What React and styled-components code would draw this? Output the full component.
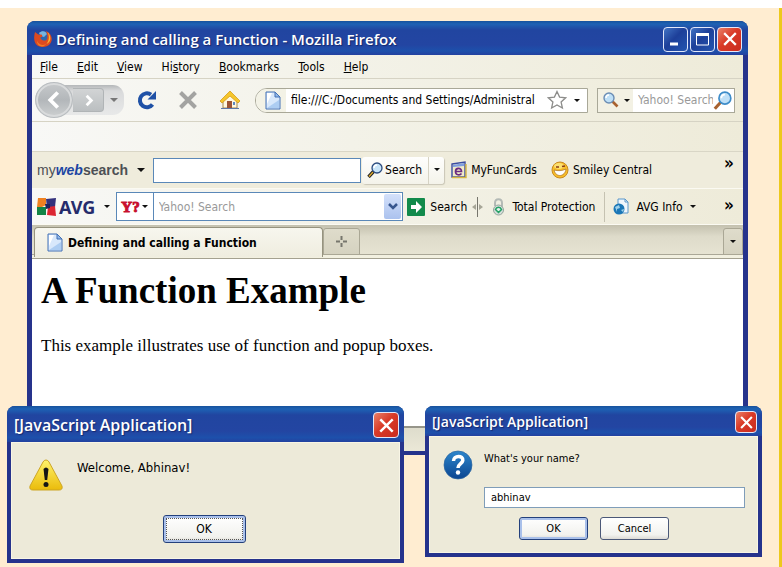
import React from 'react';
import styled, { createGlobalStyle, css } from 'styled-components';

const ui = '"DejaVu Sans Condensed", "DejaVu Sans", sans-serif';
const caption = '"Open Sans", "Noto Sans", sans-serif';

const Global = createGlobalStyle`
  * { box-sizing: border-box; }
  body { margin: 0; background: #fff; font-family: ${ui}; font-size: 12px; color: #000; }
  button, input { font: inherit; color: inherit; }
  button { padding: 0; border: 0; background: none; }
  svg { display: block; flex: none; }
`;

const Desktop = styled.main`
  position: relative;
  margin-top: 8px;
  min-height: calc(100vh - 8px);
  padding: 13px 31px 20px 27px;
  background: #ffedd1;
  border-right: 3px solid #edc91d;
`;

const frame = css`
  border: 5px solid #26338c;
  border-top: 0;
  border-radius: 8px 8px 0 0;
  background: #26338c;
`;

const Browser = styled.section`
  ${frame}
  border-bottom-width: 4px;
`;

const TitleBar = styled.header`
  display: flex;
  align-items: center;
  gap: 4px;
  height: ${p => p.$height}px;
  margin: 0 -5px;
  padding: 2px ${p => (p.$main ? 6 : 5)}px 0 7px;
  border-radius: 8px 8px 0 0;
  background: linear-gradient(#17529c 0, #1e62b4 3px, #2145a0 9px, #2345a2 70%, #1d50ab 88%, #2341a0 100%);
`;

const Title = styled.h2`
  flex: 1;
  min-width: 0;
  margin: 0;
  overflow: hidden;
  white-space: nowrap;
  font: 600 ${p => p.$size}px/22px ${caption};
  color: #fff;
  text-shadow: 1px 1px 1px #14296e;
`;

const CaptionButtons = styled.div`
  display: flex;
  gap: 2px;
`;

const CaptionButton = styled.button`
  display: grid;
  place-items: center;
  width: ${p => p.$size}px;
  height: ${p => p.$size}px;
  border: 1px solid #e2e8fa;
  border-radius: 4px;
  background: ${p => (p.$close
    ? 'linear-gradient(135deg, #ea8068, #d93a27 45%, #c92b20)'
    : 'linear-gradient(135deg, #4174c4, #1d3f99 45%, #2355b0)')};
`;

const Chrome = styled.div`
  background: linear-gradient(90deg, #f8f8f6, #f3f2e8 45%, #eeebd9);
`;

const MenuBar = styled.nav`
  display: flex;
  align-items: center;
  gap: 19px;
  height: 24px;
  padding: 0 8px;
  border-bottom: 1px solid #d6d3c4;
`;

const MenuItem = styled.button`
  line-height: 20px;
`;

const NavBar = styled.div`
  display: flex;
  align-items: center;
  height: 43px;
  padding: 0 8px 0 3px;
  border-bottom: 1px solid #d6d3c4;
`;

const HistoryGroup = styled.div`
  display: flex;
  align-items: center;
  height: 30px;
  width: 89px;
  border-radius: 16px 12px 12px 16px;
  background: linear-gradient(#b4b7b9, #d9dadb 20%, #e8e9e9);
`;

const BackButton = styled.button`
  display: grid;
  place-items: center;
  width: 38px;
  height: 36px;
  border-radius: 50%;
  border: 1px solid #b9bdc0;
  box-shadow: inset 0 0 0 2px #d9dbdc;
  background: linear-gradient(#c6c9cb, #b3b7ba 50%, #cdd0d1);
`;

const ForwardButton = styled.button`
  display: grid;
  place-items: center;
  width: 31px;
  height: 24px;
  border: 1px solid #b0b4b6;
  border-left: 0;
  border-radius: 0 4px 4px 0;
  background: linear-gradient(#d2d4d5, #bbbfc1);
`;

const Caret = styled.button`
  display: grid;
  place-items: center;
  width: ${p => p.$width || 20}px;
  height: 22px;
  color: ${p => p.$color || '#111'};
  &::after {
    content: '';
    border: ${p => p.$size || 3}px solid transparent;
    border-top-color: currentColor;
    border-bottom: 0;
  }
`;

const NavActions = styled.div`
  display: flex;
  align-items: center;
  gap: 21px;
  padding: 0 14px 0 13px;
`;

const IconButton = styled.button`
  display: grid;
  place-items: center;
`;

const AddressBox = styled.div`
  flex: 1 1 334px;
  min-width: 0;
  display: flex;
  align-items: center;
  height: 25px;
  overflow: hidden;
  border: 1px solid #a9a898;
  border-radius: 12px 0 0 12px;
  background: #fff;
`;

const PageBadge = styled.span`
  display: grid;
  place-items: center;
  width: 30px;
  height: 23px;
  background: #f3f2e6;
  padding-left: 3px;
`;

const Field = styled.input`
  flex: 1;
  width: 0;
  min-width: 0;
  height: 22px;
  padding: 0 0 0 ${p => p.$pad || 5}px;
  border: 0;
  outline: 0;
  background: transparent;
  &::placeholder { color: #999; opacity: 1; }
`;

const SearchBox = styled.div`
  flex: 0 0 138px;
  display: flex;
  align-items: center;
  height: 25px;
  margin-left: 9px;
  padding-right: 2px;
  border: 1px solid #a9a898;
  background: #fff;
`;

const EngineButton = styled.button`
  display: flex;
  align-items: center;
  gap: 5px;
  height: 23px;
  padding: 0 3px 0 5px;
  background: #f3f1e4;
`;

const Arrow = styled.span`
  border: 3px solid transparent;
  border-top-color: #111;
  border-bottom: 0;
`;

const BlankBar = styled.div`
  height: 30px;
  border-bottom: 1px solid #d9d6c6;
`;

const ToolRow = styled.div`
  display: flex;
  align-items: center;
  height: ${p => p.$height}px;
  padding: 0 9px 0 5px;
  border-bottom: 1px solid #fbfaf2;
  background: ${p => (p.$tint ? '#efecdc' : 'transparent')};
`;

const WebSearchMark = styled.span`
  font: 700 14px/20px "Liberation Sans", Arial, sans-serif;
  color: #4d5054;
  i { color: #1b45a3; }
  span { font-weight: 400; }
`;

const BlueInput = styled.input`
  flex: 0 1 208px;
  min-width: 0;
  height: 25px;
  padding: 0 5px;
  border: 1px solid #5a88b8;
  background: #fff;
`;

const SplitButton = styled.div`
  display: flex;
  height: 27px;
  margin-left: 1px;
  border-radius: 3px;
  background: linear-gradient(#fefefd, #f4f3ea);
  box-shadow: 1px 1px 1px #c9c6b6;
`;

const LabelButton = styled.button`
  display: flex;
  align-items: center;
  gap: ${p => p.$gap || 4}px;
  margin-left: ${p => p.$lead || 0}px;
  white-space: nowrap;
`;

const SplitArrow = styled.span`
  display: flex;
  border-left: 1px solid #d6d3c5;
  margin-left: 6px;
  padding-top: 2px;
`;

const Overflow = styled.button`
  margin-left: auto;
  font: 700 17px/18px ${ui};
  padding-bottom: ${p => p.$raise || 3}px;
`;

const AvgMark = styled.strong`
  margin: 0 2px;
  font: 700 18px/24px "Noto Sans", sans-serif;
  color: #252c6c;
`;

const Combo = styled.div`
  flex: 0 1 287px;
  min-width: 0;
  display: flex;
  align-items: center;
  height: 29px;
  border: 1px solid #5a88b8;
  background: #fff;
`;

const YahooButton = styled.button`
  display: flex;
  align-items: center;
  gap: 2px;
  height: 27px;
  padding: 0 5px 0 4px;
  border-right: 1px solid #5a88b8;
`;

const YahooMark = styled.span`
  font: 700 15px/18px "Liberation Serif", serif;
  color: #c8102e;
  -webkit-text-stroke: 1px #c8102e;
`;

const DropButton = styled.button`
  display: grid;
  place-items: center;
  width: 17px;
  height: 25px;
  margin-right: 1px;
  border-radius: 2px;
  background: linear-gradient(#d4e1fb, #abc2ee);
`;

const Divider = styled.span`
  width: 1px;
  height: 30px;
  margin-left: 9px;
  background: #c5c2b1;
`;

const TabStrip = styled.div`
  display: flex;
  align-items: flex-end;
  height: 34px;
  border-bottom: 1px solid #a4a190;
  box-shadow: inset 0 -3px #f2f0e0, inset 0 -4px #aaa797;
  padding: 0 0 3px 2px;
  background: linear-gradient(#c4c1af, #dedbca 35%, #e8e5d4);
`;

const Tab = styled.button`
  display: flex;
  align-items: center;
  gap: 5px;
  flex: 0 1 289px;
  min-width: 0;
  height: 30px;
  margin-bottom: -2px;
  padding: 0 12px;
  border: 1px solid #96937f;
  border-bottom: 0;
  border-radius: 4px 4px 0 0;
  background: linear-gradient(#f7f6ee, #efeddf);
  font-weight: 700;
  white-space: nowrap;
`;

const SmallTab = styled.button`
  display: grid;
  place-items: center;
  width: ${p => p.$width}px;
  height: 27px;
  border: 1px solid #aaa795;
  border-radius: 3px 3px 0 0;
  background: linear-gradient(#dfdccb, #d5d2c0);
  margin-left: ${p => (p.$end ? 'auto' : '0')};
`;

const Page = styled.article`
  min-height: 167px;
  padding: 10px 9px;
  background: #fff;
  color: #000;
  font-family: "Liberation Serif", "Times New Roman", serif;
  h1 { margin: 0 0 23px; font-size: 37px; line-height: 44px; }
  p { margin: 0; font-size: 17px; line-height: 20px; }
`;

const StatusBar = styled.footer`
  height: 25px;
  border-top: 2px solid #96958a;
  background: linear-gradient(#dedccc, #ebe8d7);
`;

const Dialogs = styled.div`
  position: absolute;
  top: 398px;
  left: 7px;
  right: 17px;
  display: flex;
  align-items: flex-start;
  gap: 21px;
`;

const Dialog = styled.section`
  ${frame}
  flex: 0 1 ${p => p.$basis}px;
  min-width: 0;
  border-width: 0 4px 4px;
  > header { margin: 0 -4px; }
`;

const DialogBody = styled.div`
  display: grid;
  grid-template-columns: auto 1fr;
  column-gap: ${p => (p.$prompt ? 11 : 14)}px;
  min-height: 117px;
  padding: ${p => (p.$prompt ? '13px 12px 12px 13px' : '16px 20px 15px 17px')};
  border: 1px solid #f8f5e5;
  background: #edead9;
`;

const Message = styled.p`
  margin: 0;
  font-size: ${p => p.$size}px;
  line-height: 18px;
`;

const PromptInput = styled.input`
  width: 100%;
  height: 21px;
  margin-top: 19px;
  padding: 0 6px;
  border: 1px solid #7f9db9;
  background: #fff;
  font-size: 11px;
`;

const Actions = styled.div`
  grid-column: 1 / -1;
  display: flex;
  justify-content: center;
  align-self: end;
  gap: 12px;
`;

const PushButton = styled.button`
  width: ${p => p.$width}px;
  height: ${p => p.$height}px;
  border: 1px solid #4b5878;
  border-radius: 3px;
  background: linear-gradient(#fff, #f2f2ee 80%, #dddbd5);
  font-size: ${p => (p.$height > 25 ? 12 : 11)}px;
  ${p => p.$primary && css`border-color: #23407c; box-shadow: inset 0 0 0 2px #a9c0ea;`}
  ${p => p.$focused && css`outline: 1px dotted #555; outline-offset: -4px;`}
`;

const Close = ({ size = 14 }) => (
  <svg width={size} height={size} viewBox="0 0 14 14"><path d="M2 2l10 10M12 2L2 12" stroke="#fff" strokeWidth="2.3" strokeLinecap="square" /></svg>
);

const Fox = () => (
  <svg width="18" height="18" viewBox="0 0 18 18">
    <circle cx="9.500" cy="7" r="6" fill="#2b66ae" />
    <path d="M5 3c3-3 7-2 8 1l-3 3-3-1z" fill="#75b4df" />
    <path d="M1 2l4 3c2-1 4 0 3 2-2 0-2 1-1 2 2 2 5 2 6 0 1-3 0-5-1-8 9 4 7 16-3 16C0 17-1 9 1 2z" fill="#dd4a20" />
    <path d="M13.500 2c4 4 4 10-1 12 3-4 3-8 1-12z" fill="#f7b632" />
    <path d="M3 11c2 4 6 5 9 3-2 4-9 3-9-3z" fill="#f17c24" />
  </svg>
);

const Chevron = ({ flip, size }) => (
  <svg width={size} height={size} viewBox="0 0 16 16"><path d={flip ? 'M6 3l5 5-5 5' : 'M11 2L5 8l6 6'} fill="none" stroke="#fff" strokeWidth="3" /></svg>
);

const Reload = () => (
  <svg width="20" height="20" viewBox="0 0 20 20">
    <path d="M15.500 14.500A7 7 0 1 1 14 4.600" fill="none" stroke="#1f51a6" strokeWidth="4" />
    <path d="M19 1v8.500h-8.500z" fill="#1f51a6" />
  </svg>
);

const Stop = () => (
  <svg width="20" height="20" viewBox="0 0 20 20"><path d="M2.500 2.500l15 15M17.500 2.500l-15 15" stroke="#a3a3a1" strokeWidth="4" /></svg>
);

const Home = () => (
  <svg width="22" height="20" viewBox="0 0 22 20">
    <path d="M4 10v8h14v-8l-7-6z" fill="#fff8df" stroke="#a8884a" />
    <path d="M11 1L1 11l2 2 8-7 8 7 2-2z" fill="#f5c62b" stroke="#d79c18" strokeWidth=".8" />
    <rect x="8" y="11" width="5" height="7" fill="#9c5435" /><rect x="14" y="12" width="2" height="3" fill="#5d88c3" />
    <path d="M2 18.500h18" stroke="#5d78a8" />
  </svg>
);

const Doc = () => (
  <svg width="16" height="19" viewBox="0 0 16 19">
    <path d="M1 1h9l5 5v12H1z" fill="#d8e8fb" stroke="#4370b5" />
    <path d="M2 2h5L2 13z" fill="#fff" /><path d="M10 1v5h5z" fill="#92b9e9" stroke="#4370b5" />
    <path d="M2 17h12V9z" fill="#adcdf2" />
  </svg>
);

const Star = () => (
  <svg width="20" height="20" viewBox="0 0 20 20"><path d="M10 1.500l2.600 5.600 6 .7-4.500 4.100 1.300 6.100-5.400-3.100L4.600 18l1.300-6.100-4.500-4.100 6-.7z" fill="#fff" stroke="#8d8d8b" strokeWidth="1.300" /></svg>
);

const Lens = ({ size = 16, flip, handle = '#a9622f', rim = '#6c8db4' }) => (
  <svg width={size} height={size} viewBox="0 0 16 16">
    <path d={flip ? 'M6.500 9.500L1.500 15' : 'M9.500 9.500l5 5'} stroke={handle} strokeWidth="2.600" />
    <circle cx={flip ? 10 : 6} cy="6" r="5" fill="#bfe0f7" stroke={rim} strokeWidth="1.400" />
    <path d={flip ? 'M7 6c0-2 1-3 3-3' : 'M3 6c0-2 1-3 3-3'} fill="none" stroke="#fff" strokeWidth="1.500" />
  </svg>
);

const BarLens = () => (
  <svg width="16" height="16" viewBox="0 0 16 16">
    <path d="M6.500 9.500L1.500 15" stroke="#222" strokeWidth="3.400" />
    <path d="M6 10l-4 4.500" stroke="#e3ae2c" strokeWidth="1.300" />
    <circle cx="10" cy="6" r="5" fill="#c9e5f8" stroke="#2d4c7e" strokeWidth="1.300" />
    <path d="M7 6c0-2 1-3 3-3" fill="none" stroke="#fff" strokeWidth="1.500" />
  </svg>
);

const FunCard = () => (
  <svg width="16" height="18" viewBox="0 0 16 18">
    <path d="M1 3l13-2v15H1z" fill="#f1ecc9" stroke="#3b4ca0" strokeWidth="1.400" />
    <path d="M2 4l11-2v3L2 6z" fill="#7f9fe0" />
    <path d="M1 16.500h14V3" fill="none" stroke="#d5b640" strokeWidth="1.400" />
    <path d="M4.500 10.500h6c0-4.500-6-4-6 0 0 4 4.500 4 6 2" fill="none" stroke="#6b2b82" strokeWidth="1.700" />
  </svg>
);

const Smiley = () => (
  <svg width="18" height="18" viewBox="0 0 18 18">
    <circle cx="9" cy="9" r="8" fill="#f7bd29" stroke="#c98a20" />
    <ellipse cx="8" cy="5" rx="5" ry="3" fill="#fce071" />
    <path d="M3 9c4 1 8 1 12-1-1 8-10 9-12 1z" fill="#fff" stroke="#a86d20" strokeWidth=".7" />
    <path d="M5 6l3 0M11 5.500l3-.5" stroke="#8b3c14" strokeWidth="1.600" />
  </svg>
);

const AvgLogo = () => (
  <svg width="20" height="20" viewBox="0 0 20 20">
    <path d="M1 1l8 0v7l-4 2H0z" fill="#ef8122" /><path d="M9 2l10-1-1 9-8 1z" fill="#34317c" />
    <path d="M0 10h9v8H0z" fill="#138447" /><path d="M11 10l7-1 1 10-9-1z" fill="#dc2632" />
    <path d="M8 7l5 0 0 4-4 1z" fill="#20245f" />
  </svg>
);

const GoArrow = () => (
  <svg width="18" height="18" viewBox="0 0 18 18"><rect width="18" height="18" rx="1" fill="#118a4b" /><path d="M4 7h5V3l6 6-6 6v-4H4z" fill="#fff" /></svg>
);

const Grip = () => (
  <svg width="11" height="20" viewBox="0 0 11 20"><path d="M5.500 0v20" stroke="#77766d" /><path d="M0 10l4-3v6zM11 10L7 7v6z" fill="#a7a698" /></svg>
);

const Lock = () => (
  <svg width="13" height="18" viewBox="0 0 13 18">
    <path d="M3 8V5c0-5 7-5 7 0v4" fill="none" stroke="#b4bab6" strokeWidth="2" />
    <circle cx="6.500" cy="12" r="5" fill="#d4ddd9" stroke="#94a59d" />
    <path d="M3.500 11.500l3 3 3-3c-1-3-5-3-6 0z" fill="#e6f2ec" stroke="#24a165" strokeWidth="1.500" />
  </svg>
);

const GlobeDoc = () => (
  <svg width="16" height="18" viewBox="0 0 16 18">
    <path d="M5 1h7l3 3v11H5z" fill="#eff6fc" stroke="#5a97ca" /><path d="M12 1v3h3" fill="none" stroke="#5a97ca" />
    <circle cx="6" cy="11" r="5.500" fill="#1b77b7" /><path d="M2 9l4-2 1 3-3 1v3zM8 12l3-1-1 3z" fill="#9fd1ea" />
  </svg>
);

const Warning = () => (
  <svg width="34" height="32" viewBox="0 0 34 32">
    <defs><linearGradient id="warn" x2="0" y2="1"><stop stopColor="#fff36a" /><stop offset="1" stopColor="#eabb0b" /></linearGradient></defs>
    <path d="M17 1q2 0 3 2l13 24q1 4-3 4H4q-4 0-3-4L14 3q1-2 3-2z" fill="url(#warn)" stroke="#cda525" />
    <path d="M14.500 10q2.500-3 5 0l-1.300 11h-2.400z" fill="#151515" /><circle cx="17" cy="25.500" r="2.500" fill="#151515" />
  </svg>
);

const Question = () => (
  <svg width="30" height="30" viewBox="0 0 30 30">
    <defs><linearGradient id="ask" x2="0" y2="1"><stop stopColor="#2c86cc" /><stop offset="1" stopColor="#0b4590" /></linearGradient></defs>
    <circle cx="15" cy="15" r="14" fill="url(#ask)" stroke="#2b65a0" strokeWidth=".7" />
    <path d="M10.500 11c0-6 10-6 9.300-.5-.3 3-4.800 3.500-4.800 7.500" fill="none" stroke="#fff" strokeWidth="3.500" /><circle cx="15" cy="22.500" r="2.200" fill="#fff" />
  </svg>
);

const menus = [['', 'F', 'ile'], ['', 'E', 'dit'], ['', 'V', 'iew'], ['Hi', 's', 'tory'], ['', 'B', 'ookmarks'], ['', 'T', 'ools'], ['', 'H', 'elp']];

export default function App() {
  return (
    <>
      <Global />
      <Desktop>
        <Browser>
          <TitleBar $height={34} $main>
            <Fox />
            <Title $size={15}>Defining and calling a Function - Mozilla Firefox</Title>
            <CaptionButtons>
              <CaptionButton $size={25} aria-label="Minimize"><svg width="15" height="15" viewBox="0 0 15 15"><path d="M2 12h8" stroke="#fff" strokeWidth="3" /></svg></CaptionButton>
              <CaptionButton $size={25} aria-label="Maximize"><svg width="15" height="15" viewBox="0 0 15 15"><path d="M1.500 2v11h12V2z" fill="none" stroke="#fff" /><path d="M1 2.500h13" stroke="#fff" strokeWidth="3" /></svg></CaptionButton>
              <CaptionButton $size={25} $close aria-label="Close"><Close /></CaptionButton>
            </CaptionButtons>
          </TitleBar>
          <Chrome>
            <MenuBar>
              {menus.map(([a, key, b]) => <MenuItem key={a + key + b}>{a}<u>{key}</u>{b}</MenuItem>)}
            </MenuBar>
            <NavBar>
              <HistoryGroup>
                <BackButton aria-label="Back"><Chevron size={20} /></BackButton>
                <ForwardButton aria-label="Forward"><Chevron flip size={15} /></ForwardButton>
                <Caret $color="#777" $size={4} aria-label="Recent pages" />
              </HistoryGroup>
              <NavActions>
                <IconButton aria-label="Reload"><Reload /></IconButton>
                <IconButton aria-label="Stop"><Stop /></IconButton>
                <IconButton aria-label="Home"><Home /></IconButton>
              </NavActions>
              <AddressBox>
                <PageBadge><Doc /></PageBadge>
                <Field aria-label="Address" defaultValue="file:///C:/Documents and Settings/Administral" />
                <IconButton aria-label="Bookmark"><Star /></IconButton>
                <Caret aria-label="Show history" />
              </AddressBox>
              <SearchBox>
                <EngineButton aria-label="Search engine"><Lens /><Arrow /></EngineButton>
                <Field aria-label="Search the web" placeholder="Yahoo! Search" />
                <IconButton aria-label="Go"><Lens size={19} flip rim="#3d8cc9" /></IconButton>
              </SearchBox>
            </NavBar>
            <BlankBar />
            <ToolRow $height={37} $tint>
              <WebSearchMark><span>my</span><i>web</i>search</WebSearchMark>
              <Caret $width={25} $size={4} aria-label="My web search menu" />
              <BlueInput aria-label="My web search" />
              <SplitButton>
                <LabelButton $gap={2} $lead={5}><BarLens />Search</LabelButton>
                <SplitArrow><Caret $width={15} aria-label="Search options" /></SplitArrow>
              </SplitButton>
              <LabelButton $lead={7}><FunCard />MyFunCards</LabelButton>
              <LabelButton $lead={14}><Smiley />Smiley Central</LabelButton>
              <Overflow $raise={14} aria-label="More buttons">»</Overflow>
            </ToolRow>
            <ToolRow $height={36}>
              <AvgLogo />
              <AvgMark>AVG</AvgMark>
              <Caret $width={19} aria-label="AVG menu" />
              <Combo>
                <YahooButton aria-label="Yahoo!"><YahooMark>Y?</YahooMark><Arrow /></YahooButton>
                <Field aria-label="Yahoo! Search" placeholder="Yahoo! Search" />
                <DropButton aria-label="Previous searches"><svg width="10" height="8" viewBox="0 0 10 8"><path d="M1 1l4 4 4-4" fill="none" stroke="#37568f" strokeWidth="2.500" /></svg></DropButton>
              </Combo>
              <LabelButton $gap={5} $lead={4}><GoArrow />Search</LabelButton>
              <LabelButton $lead={5} aria-label="Resize search box"><Grip /></LabelButton>
              <LabelButton $gap={7} $lead={9}><Lock />Total Protection</LabelButton>
              <Divider />
              <LabelButton $gap={7} $lead={8}><GlobeDoc />AVG Info<Arrow /></LabelButton>
              <Overflow aria-label="More AVG buttons">»</Overflow>
            </ToolRow>
            <TabStrip>
              <Tab><Doc />Defining and calling a Function</Tab>
              <SmallTab $width={37} aria-label="New tab"><svg width="11" height="11" viewBox="0 0 11 11"><path d="M5.500 0v4M5.500 7v4M0 5.500h4M7 5.500h4" stroke="#77766d" strokeWidth="2" /></svg></SmallTab>
              <SmallTab $width={20} $end aria-label="List tabs"><Arrow /></SmallTab>
            </TabStrip>
          </Chrome>
          <Page>
            <h1>A Function Example</h1>
            <p>This example illustrates use of function and popup boxes.</p>
          </Page>
          <StatusBar />
        </Browser>
        <Dialogs>
          <Dialog $basis={397} role="dialog" aria-label="JavaScript alert">
            <TitleBar $height={36}>
              <Title $size={16}>[JavaScript Application]</Title>
              <CaptionButton $size={26} $close aria-label="Close"><Close size={15} /></CaptionButton>
            </TitleBar>
            <DialogBody>
              <Warning />
              <Message $size={13}>Welcome, Abhinav!</Message>
              <Actions><PushButton $width={83} $height={28} $primary $focused>OK</PushButton></Actions>
            </DialogBody>
          </Dialog>
          <Dialog $basis={337} role="dialog" aria-label="JavaScript prompt">
            <TitleBar $height={30}>
              <Title $size={14}>[JavaScript Application]</Title>
              <CaptionButton $size={22} $close aria-label="Close"><Close size={13} /></CaptionButton>
            </TitleBar>
            <DialogBody $prompt>
              <Question />
              <div>
                <Message as="label" htmlFor="name" $size={11}>What's your name?</Message>
                <PromptInput id="name" defaultValue="abhinav" />
              </div>
              <Actions>
                <PushButton $width={69} $height={23} $primary>OK</PushButton>
                <PushButton $width={69} $height={23}>Cancel</PushButton>
              </Actions>
            </DialogBody>
          </Dialog>
        </Dialogs>
      </Desktop>
    </>
  );
}
